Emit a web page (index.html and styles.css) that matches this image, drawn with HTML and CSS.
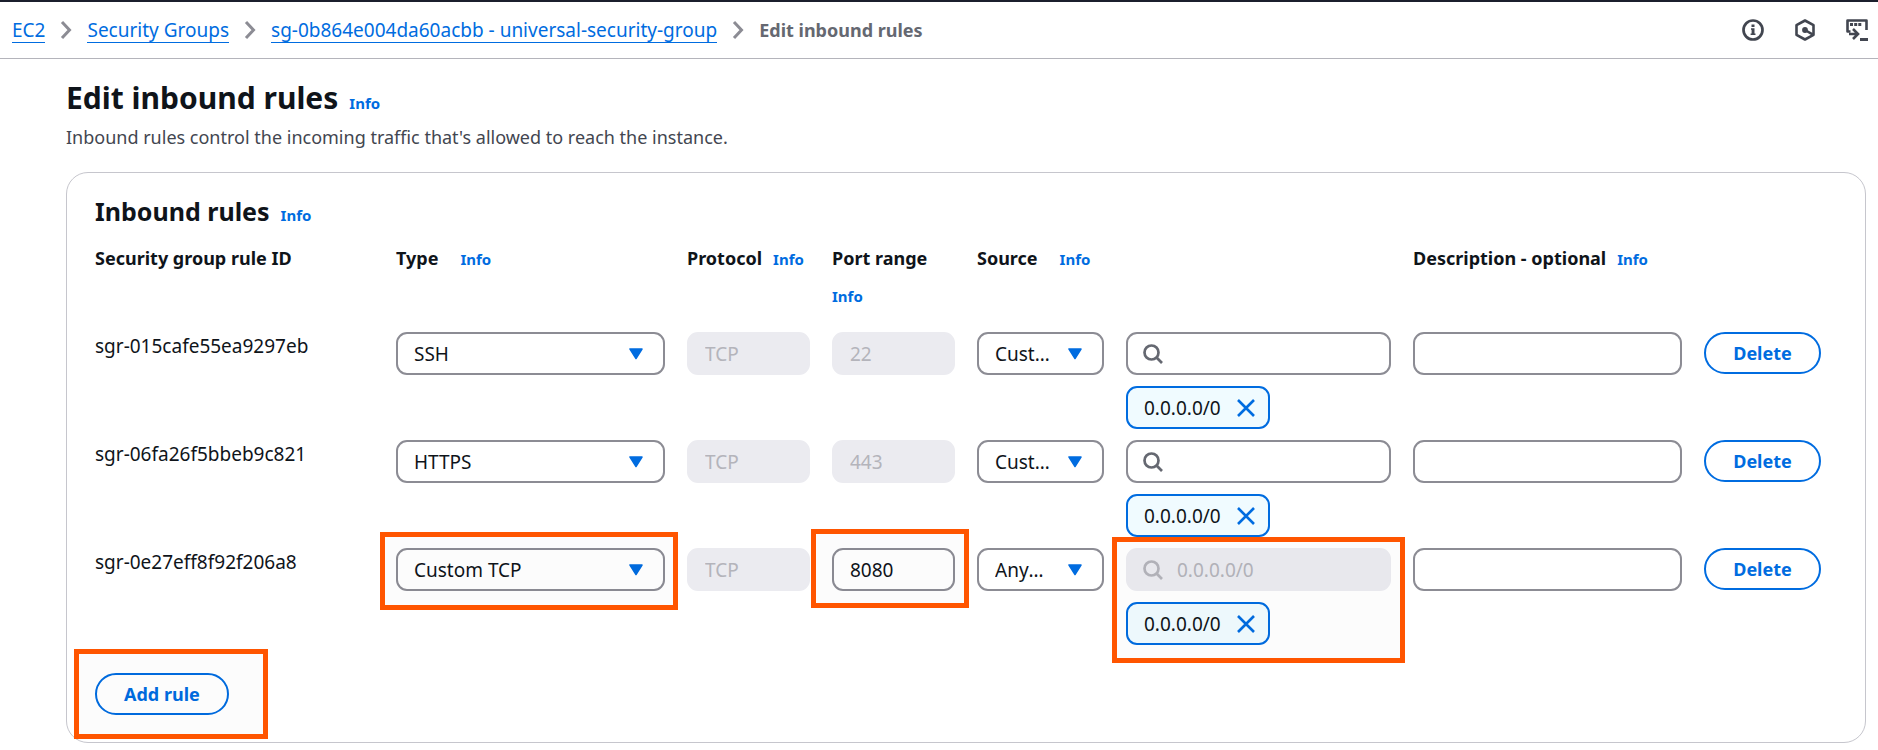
FILE: index.html
```html
<!DOCTYPE html>
<html lang="en">
<head>
<meta charset="utf-8">
<meta name="viewport" content="width=device-width, initial-scale=1">
<title>Edit inbound rules</title>
<link rel="stylesheet" href="styles.css">
</head>
<body>
<svg class="sprite" aria-hidden="true">
  <symbol id="chevron" viewBox="0 0 12 20"><path d="M2 2l7.500 8L2 18" fill="none" stroke="currentColor" stroke-width="3"/></symbol>
  <symbol id="caret" viewBox="0 0 14 12"><path d="M1 1h12L7 10.500z" fill="currentColor" stroke="currentColor" stroke-width="1.500" stroke-linejoin="round"/></symbol>
  <symbol id="search" viewBox="0 0 20 20"><circle cx="8.500" cy="8.500" r="7" fill="none" stroke="currentColor" stroke-width="2.700"/><path d="M13.300 13.300L19 19" fill="none" stroke="currentColor" stroke-width="2.700"/></symbol>
  <symbol id="close" viewBox="0 0 18 18"><path d="M1 1l16 16M17 1L1 17" fill="none" stroke="currentColor" stroke-width="2.600"/></symbol>
</svg>

<header class="topbar">
  <nav class="breadcrumbs" aria-label="Breadcrumbs">
    <a class="crumb" href="#">EC2</a>
    <svg class="chevron"><use href="#chevron"/></svg>
    <a class="crumb" href="#">Security Groups</a>
    <svg class="chevron"><use href="#chevron"/></svg>
    <a class="crumb" href="#">sg-0b864e004da60acbb - universal-security-group</a>
    <svg class="chevron"><use href="#chevron"/></svg>
    <span class="crumb-current">Edit inbound rules</span>
  </nav>
  <div class="tools">
    <button class="tool" type="button" aria-label="Info panel">
      <svg viewBox="0 0 22 22"><circle cx="11" cy="11" r="9.500" fill="none" stroke="currentColor" stroke-width="2.700"/><path d="M9.500 5.500h3v2.500h-3zM9 9.300h3.500v5.200h1v1.500H8.600v-1.500h1v-3.700H9z" fill="currentColor"/></svg>
    </button>
    <button class="tool" type="button" aria-label="Diagnostics">
      <svg viewBox="0 0 22 22"><path d="M11 1.500l8.500 4.700v9.600L11 20.500l-8.500-4.700V6.200z" fill="none" stroke="currentColor" stroke-width="2.600" stroke-linejoin="round"/><circle cx="11" cy="11" r="2.900" fill="currentColor"/><path d="M11 11l7.500 4.300" stroke="currentColor" stroke-width="2.500"/></svg>
    </button>
    <button class="tool" type="button" aria-label="CloudShell">
      <svg viewBox="0 0 22 22"><path d="M4.500 12.500H1.500v-11h19v9.500" fill="none" stroke="currentColor" stroke-width="2.600" stroke-linejoin="round"/><path d="M4 4h3v3H4zM8.200 4h3v3h-3zM12.300 4h3v3h-3zM14 19h8v3h-8z" fill="currentColor"/><path d="M3 15h8.500M7 10l5 5-5 5" fill="none" stroke="currentColor" stroke-width="2.600"/></svg>
    </button>
  </div>
</header>

<main class="page">
  <h1 class="title">Edit inbound rules <a class="info" href="#">Info</a></h1>
  <p class="lead">Inbound rules control the incoming traffic that's allowed to reach the instance.</p>

  <section class="card" aria-labelledby="rules-title">
    <h2 class="card-title"><span id="rules-title">Inbound rules</span> <a class="info" href="#">Info</a></h2>

    <div class="grid head">
      <div class="col"><span>Security group rule ID</span></div>
      <div class="col wide"><span id="c-type">Type</span><a class="info" href="#">Info</a></div>
      <div class="col"><span id="c-proto">Protocol</span><a class="info" href="#">Info</a></div>
      <div class="col"><span id="c-port">Port range</span><a class="info" href="#">Info</a></div>
      <div class="col wide source"><span id="c-source">Source</span><a class="info" href="#">Info</a></div>
      <div class="col"><span id="c-desc">Description - optional</span><a class="info" href="#">Info</a></div>
    </div>

    <div class="grid row">
      <div class="rule-id">sgr-015cafe55ea9297eb</div>
      <div class="select"><select class="field" aria-labelledby="c-type"><option>SSH</option></select><svg class="caret"><use href="#caret"/></svg></div>
      <input class="field" aria-labelledby="c-proto" value="TCP" disabled>
      <input class="field" aria-labelledby="c-port" value="22" disabled>
      <div class="select"><select class="field" aria-labelledby="c-source"><option>Custom</option></select><svg class="caret"><use href="#caret"/></svg></div>
      <div class="addresses">
        <div class="search"><input class="field" type="text" aria-label="Source address"><svg class="glass"><use href="#search"/></svg></div>
        <div class="token">0.0.0.0/0<button class="remove" type="button" aria-label="Remove 0.0.0.0/0"><svg><use href="#close"/></svg></button></div>
      </div>
      <input class="field" type="text" aria-labelledby="c-desc">
      <button class="button" type="button">Delete</button>
    </div>

    <div class="grid row">
      <div class="rule-id">sgr-06fa26f5bbeb9c821</div>
      <div class="select"><select class="field" aria-labelledby="c-type"><option>HTTPS</option></select><svg class="caret"><use href="#caret"/></svg></div>
      <input class="field" aria-labelledby="c-proto" value="TCP" disabled>
      <input class="field" aria-labelledby="c-port" value="443" disabled>
      <div class="select"><select class="field" aria-labelledby="c-source"><option>Custom</option></select><svg class="caret"><use href="#caret"/></svg></div>
      <div class="addresses">
        <div class="search"><input class="field" type="text" aria-label="Source address"><svg class="glass"><use href="#search"/></svg></div>
        <div class="token">0.0.0.0/0<button class="remove" type="button" aria-label="Remove 0.0.0.0/0"><svg><use href="#close"/></svg></button></div>
      </div>
      <input class="field" type="text" aria-labelledby="c-desc">
      <button class="button" type="button">Delete</button>
    </div>

    <div class="grid row">
      <div class="rule-id">sgr-0e27eff8f92f206a8</div>
      <div class="select mark mark-type"><select class="field" aria-labelledby="c-type"><option>Custom TCP</option></select><svg class="caret"><use href="#caret"/></svg></div>
      <input class="field" aria-labelledby="c-proto" value="TCP" disabled>
      <div class="mark mark-port"><input class="field" aria-labelledby="c-port" value="8080"></div>
      <div class="select"><select class="field" aria-labelledby="c-source"><option>Anywhere-IPv4</option></select><svg class="caret"><use href="#caret"/></svg></div>
      <div class="addresses mark mark-source">
        <div class="search"><input class="field" type="text" aria-label="Source address" value="0.0.0.0/0" disabled><svg class="glass muted"><use href="#search"/></svg></div>
        <div class="token">0.0.0.0/0<button class="remove" type="button" aria-label="Remove 0.0.0.0/0"><svg><use href="#close"/></svg></button></div>
      </div>
      <input class="field" type="text" aria-labelledby="c-desc">
      <button class="button" type="button">Delete</button>
    </div>

    <div class="actions">
      <div class="mark mark-add"><button class="button add" type="button">Add rule</button></div>
    </div>
  </section>
</main>
</body>
</html>
```
FILE: styles.css
```css
:root {
  --blue: #006ce0;
  --ink: #0f141a;
  --grey: #8c8c94;
  --orange: #ff5500;
}

* { box-sizing: border-box; }

body {
  margin: 0;
  background: #fff;
  color: var(--ink);
  font: 19px/28px "Noto Sans", "Open Sans", sans-serif;
}

svg { display: block; }
.sprite { display: none; }
a { color: var(--blue); text-decoration: none; }

.topbar {
  display: flex;
  align-items: center;
  justify-content: space-between;
  height: 59px;
  padding: 0 10px 0 12px;
  border-top: 2px solid #1b1f2d;
  border-bottom: 1px solid #b4b4bb;
}

.breadcrumbs {
  display: flex;
  align-items: center;
  gap: 15px;
}

.crumb {
  border-bottom: 1px solid var(--blue);
  line-height: 24px;
}

.chevron { width: 12px; height: 20px; color: var(--grey); }
.crumb-current { color: #656871; font-size: 18px; font-weight: 700; line-height: 24px; }

.tools { display: flex; gap: 30px; }
.tool { padding: 0; border: 0; background: none; color: #424650; }
.tool svg { width: 22px; height: 22px; }

.page { padding: 20px 12px 8px 66px; }

.title, .card-title {
  display: flex;
  align-items: baseline;
  margin: 0;
  font-weight: 700;
}

.title { gap: 11px; font-size: 30px; line-height: 38px; }
.card-title { gap: 11px; font-size: 25px; line-height: 32px; }
.info { font-size: 15px; font-weight: 700; }

.lead { margin: 1px 0 21px; color: #424650; font-size: 18px; }

.card {
  padding: 22px 44px 27px 28px;
  border: 1px solid #c6c6cd;
  border-radius: 22px;
}

.grid {
  display: grid;
  grid-template-columns: 279fr 269fr 123fr 123fr 127fr 265fr 269fr 117fr;
  column-gap: 22px;
  align-items: start;
}

.grid > * { min-width: 0; }

.head { margin: 8px 0 17px; font-size: 18px; font-weight: 700; line-height: 38px; }
.col { display: flex; flex-wrap: wrap; align-items: baseline; column-gap: 11px; }
.wide { column-gap: 22px; }
.source { grid-column: span 2; }

.row { margin-bottom: 11px; }

.field {
  display: block;
  width: 100%;
  min-width: 0;
  height: 43px;
  margin: 0;
  padding: 0 16px;
  border: 2px solid var(--grey);
  border-radius: 11px;
  background: #fff;
  color: var(--ink);
  font: inherit;
}

.field:disabled { border-color: #ebebf0; background: #ebebf0; color: #b4b4bb; }

.select, .search { display: grid; align-items: center; }
.select > *, .search > * { grid-area: 1 / 1; }
.select .field { appearance: none; padding-right: 48px; text-overflow: ellipsis; }

.caret {
  justify-self: end;
  width: 14px;
  height: 12px;
  margin-right: 22px;
  color: var(--blue);
  pointer-events: none;
}

.glass { width: 20px; height: 20px; margin-left: 17px; color: #656871; pointer-events: none; }
.glass.muted { color: #b4b4bb; }
.search .field { padding-left: 49px; }

.addresses { display: grid; justify-items: start; gap: 11px; }
.search { width: 100%; }

.token {
  display: flex;
  align-items: center;
  gap: 16px;
  height: 43px;
  padding: 0 13px 0 16px;
  border: 2px solid var(--blue);
  border-radius: 11px;
  background: #f0fbff;
}

.remove { padding: 0; border: 0; background: none; color: var(--blue); }
.remove svg { width: 18px; height: 18px; }

.button {
  height: 42px;
  padding: 0;
  border: 2px solid var(--blue);
  border-radius: 21px;
  background: #fff;
  color: var(--blue);
  font: inherit;
  font-size: 18px;
  font-weight: 700;
}

.add { display: block; padding: 0 27px; }
.actions { display: flex; padding-top: 17px; }

/* Orange call-out frames around the edited controls */
.mark { position: relative; }
.mark::after {
  content: "";
  position: absolute;
  border: 5px solid var(--orange);
  background: rgba(0, 0, 0, 0.01);
  pointer-events: none;
}
.mark-type::after { inset: -16px -13px -19px -16px; }
.mark-port::after { inset: -19px -14px -17px -21px; }
.mark-source::after { inset: -11px -14px -18px -14px; }
.mark-add::after { inset: -24px -39px -24px -21px; }
```
